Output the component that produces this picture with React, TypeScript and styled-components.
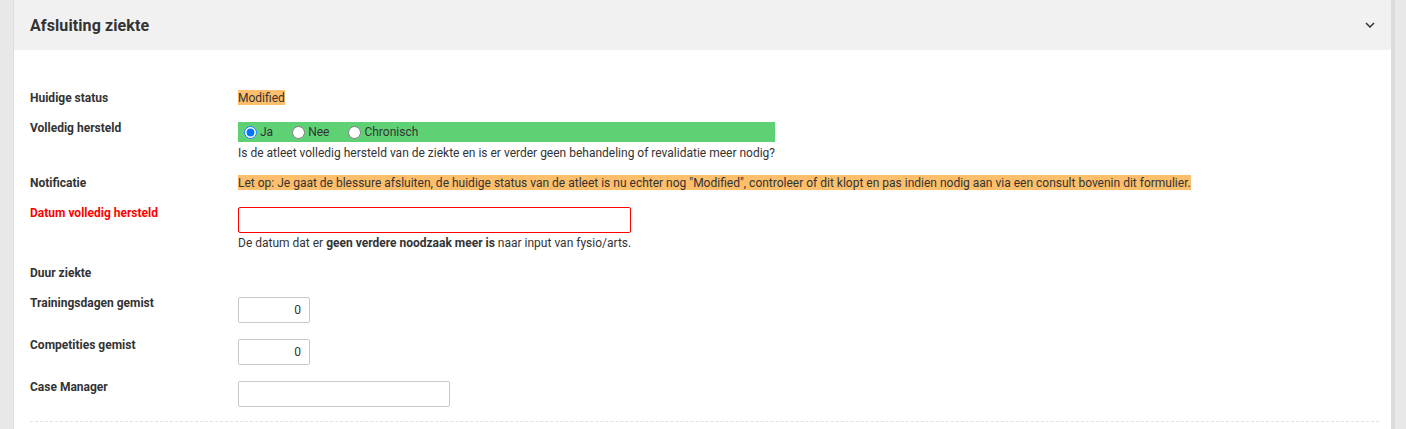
import React from "react";
import styled, { createGlobalStyle } from "styled-components";

const GlobalStyle = createGlobalStyle`
    html, body {
        margin: 0;
        padding: 0;
        background: #e8e8e8;
        font-family: Roboto, "Liberation Sans", Arial, sans-serif;
        color: #333;
    }
`;

const Page = styled.div`
    padding-left: 13px;
    padding-right: 15px;
    height: 429px;
    overflow: hidden;
`;

const Card = styled.div`
    background: #fff;
    border-left: 1px solid #dedede;
    box-shadow: 4px 0 0 #dcdcdc;
    min-height: 520px;
`;

const Header = styled.div`
    height: 50px;
    background: #f1f1f1;
    display: flex;
    align-items: center;
    justify-content: space-between;
    padding: 0 16px 0 16px;
`;

const Title = styled.h3`
    margin: 0;
    font-size: 16px;
    font-weight: 700;
    color: #333;
    letter-spacing: 0.1px;
`;

const Body = styled.div`
    padding: 40px 12px 0 16px;
`;

const Row = styled.div`
    display: flex;
    align-items: flex-start;
    margin-bottom: 14px;
`;

const Label = styled.div<{ $error?: boolean }>`
    width: 208px;
    flex-shrink: 0;
    font-size: 12px;
    font-weight: 700;
    line-height: 16px;
    color: ${p => (p.$error ? "#ff0000" : "#333")};
`;

const Field = styled.div`
    display: flex;
    flex-direction: column;
    width: fit-content;
    font-size: 12px;
    line-height: 16px;
`;

const Marked = styled.span<{ $tone: "orange" | "green" }>`
    background: ${p => (p.$tone === "orange" ? "#fdbf6b" : "#5fd175")};
    color: #333;
    padding-top: 1px;
`;

const RadioBar = styled.div`
    margin-top: 2px;
    margin-bottom: 1px;
    height: 20px;
    background: #5fd175;
    display: flex;
    align-items: center;
    padding-left: 6px;
`;

const RadioOption = styled.label`
    display: flex;
    align-items: center;
    margin-right: 19px;
    font-size: 12px;
    color: #333;

    input {
        margin: 0 3px 0 0;
        width: 13px;
        height: 13px;
    }
`;

const Help = styled.div`
    margin-top: 2px;
    line-height: 16px;
    color: #333;

    b {
        font-weight: 700;
    }
`;

const TextInput = styled.input<{ $width: number; $error?: boolean; $alignRight?: boolean }>`
    box-sizing: border-box;
    margin-top: 2px;
    width: ${p => p.$width}px;
    height: 26px;
    border: 1px solid ${p => (p.$error ? "#ff0000" : "#c8c8c8")};
    border-radius: 2px;
    padding: 0 8px;
    font-family: Roboto, "Liberation Sans", Arial, sans-serif;
    font-size: 12px;
    color: #333;
    text-align: ${p => (p.$alignRight ? "right" : "left")};
    outline: none;
    background: #fff;
`;

const Divider = styled.div`
    border-top: 1px dashed #e1e1e8;
    margin-top: 2px;
`;

const Chevron = () => (
    <svg width="10" height="6" viewBox="0 0 10 6" fill="none">
        <path d="M1 1l4 4 4-4" stroke="#333" strokeWidth="1.5" />
    </svg>
);

export default function App() {
    return (
        <Page>
            <GlobalStyle />
            <Card>
                <Header>
                    <Title>Afsluiting ziekte</Title>
                    <Chevron />
                </Header>
                <Body>
                    <Row>
                        <Label>Huidige status</Label>
                        <Field>
                            <div>
                                <Marked $tone="orange">Modified</Marked>
                            </div>
                        </Field>
                    </Row>
                    <Row>
                        <Label>Volledig hersteld</Label>
                        <Field>
                            <RadioBar>
                                <RadioOption>
                                    <input type="radio" name="hersteld" defaultChecked />
                                    Ja
                                </RadioOption>
                                <RadioOption>
                                    <input type="radio" name="hersteld" />
                                    Nee
                                </RadioOption>
                                <RadioOption>
                                    <input type="radio" name="hersteld" />
                                    Chronisch
                                </RadioOption>
                            </RadioBar>
                            <Help>
                                Is de atleet volledig hersteld van de ziekte en is er verder geen behandeling of revalidatie meer nodig?
                            </Help>
                        </Field>
                    </Row>
                    <Row>
                        <Label>Notificatie</Label>
                        <Field>
                            <div>
                                <Marked $tone="orange">
                                    Let op: Je gaat de blessure afsluiten, de huidige status van de atleet is nu echter nog "Modified", controleer of dit klopt en pas indien nodig aan via een consult bovenin dit formulier.
                                </Marked>
                            </div>
                        </Field>
                    </Row>
                    <Row>
                        <Label $error>Datum volledig hersteld</Label>
                        <Field>
                            <TextInput $width={393} $error type="text" />
                            <Help>
                                De datum dat er <b>geen verdere noodzaak meer is</b> naar input van fysio/arts.
                            </Help>
                        </Field>
                    </Row>
                    <Row>
                        <Label>Duur ziekte</Label>
                    </Row>
                    <Row>
                        <Label>Trainingsdagen gemist</Label>
                        <Field>
                            <TextInput $width={72} $alignRight type="text" defaultValue="0" />
                        </Field>
                    </Row>
                    <Row>
                        <Label>Competities gemist</Label>
                        <Field>
                            <TextInput $width={72} $alignRight type="text" defaultValue="0" />
                        </Field>
                    </Row>
                    <Row>
                        <Label>Case Manager</Label>
                        <Field>
                            <TextInput $width={212} type="text" />
                        </Field>
                    </Row>
                    <Divider />
                </Body>
            </Card>
        </Page>
    );
}
